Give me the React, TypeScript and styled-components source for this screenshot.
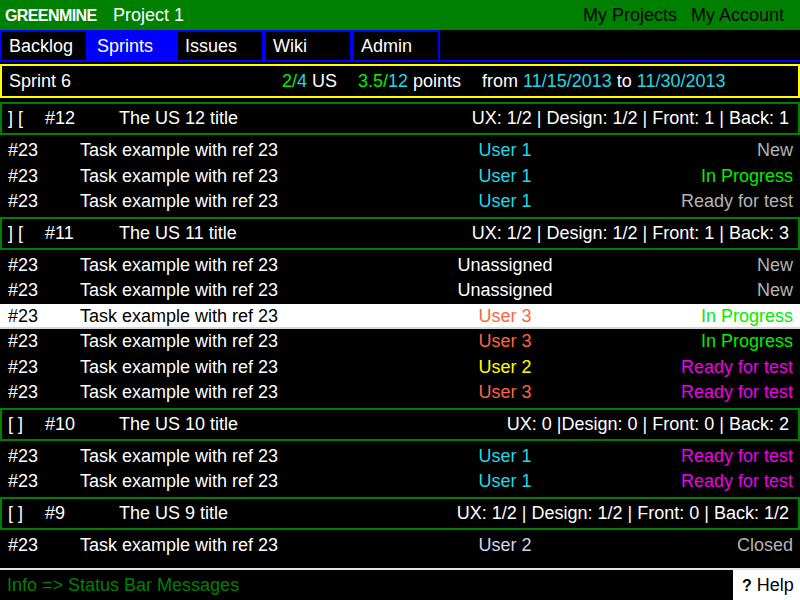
import React from "react";
import styled, {createGlobalStyle} from "styled-components";

const GlobalStyle = createGlobalStyle`
  html, body {
    margin: 0;
    padding: 0;
    background: #000;
  }
  body {
    font-family: "Liberation Sans", Arial, sans-serif;
    font-size: 18px;
    color: #fff;
  }
`;

const C = {
    green: "#008000",
    bright: "#00ee00",
    cyan: "#1fd8e8",
    blue: "#0000ff",
    yellow: "#ffff00",
    magenta: "#ee00ee",
    orange: "#ff6340",
    grey: "#b4b4b4",
    lavender: "#d4d4ee",
};

interface ITask {
    ref: string,
    title: string,
    user: string,
    userColor: string,
    status: string,
    statusColor: string,
    selected?: boolean
}

interface IStory {
    mark: string,
    ref: string,
    title: string,
    stats: string,
    tasks: ITask[]
}

const task = (user: string, userColor: string, status: string, statusColor: string, selected = false): ITask => ({
    ref: "#23",
    title: "Task example with ref 23",
    user, userColor, status, statusColor, selected
});

const stories: IStory[] = [
    {
        mark: "] [", ref: "#12", title: "The US 12 title",
        stats: "UX: 1/2 | Design: 1/2 | Front: 1 | Back: 1",
        tasks: [
            task("User 1", C.cyan, "New", C.grey),
            task("User 1", C.cyan, "In Progress", C.bright),
            task("User 1", C.cyan, "Ready for test", C.grey),
        ]
    },
    {
        mark: "] [", ref: "#11", title: "The US 11 title",
        stats: "UX: 1/2 | Design: 1/2 | Front: 1 | Back: 3",
        tasks: [
            task("Unassigned", "#fff", "New", C.grey),
            task("Unassigned", "#fff", "New", C.grey),
            task("User 3", C.orange, "In Progress", C.bright, true),
            task("User 3", C.orange, "In Progress", C.bright),
            task("User 2", C.yellow, "Ready for test", C.magenta),
            task("User 3", C.orange, "Ready for test", C.magenta),
        ]
    },
    {
        mark: "[ ]", ref: "#10", title: "The US 10 title",
        stats: "UX: 0 |Design: 0 | Front: 0 | Back: 2",
        tasks: [
            task("User 1", C.cyan, "Ready for test", C.magenta),
            task("User 1", C.cyan, "Ready for test", C.magenta),
        ]
    },
    {
        mark: "[ ]", ref: "#9", title: "The US 9 title",
        stats: "UX: 1/2 | Design: 1/2 | Front: 0 | Back: 1/2",
        tasks: [
            task("User 2", C.lavender, "Closed", C.grey),
        ]
    },
];

const tabs = ["Backlog", "Sprints", "Issues", "Wiki", "Admin"];

const Screen = styled.div`
  width: 800px;
  height: 600px;
  display: flex;
  flex-direction: column;
  background: #000;
  overflow: hidden;
`;

const TopBar = styled.header`
  height: 30px;
  flex: 0 0 30px;
  background: ${C.green};
  display: flex;
  align-items: center;
  padding: 1px 16px 0 5px;
  box-sizing: border-box;
`;

const Brand = styled.span`
  font-weight: bold;
  font-size: 16px;
  letter-spacing: -0.6px;
  width: 108px;
`;

const ProjectName = styled.span`
  flex: 1;
`;

const NavLinks = styled.nav`
  display: flex;
  gap: 14px;
  color: #000;
`;

const TabBar = styled.div`
  display: flex;
  height: 32px;
  flex: 0 0 32px;
`;

const Tab = styled.div<{ $active?: boolean }>`
  width: 88px;
  box-sizing: border-box;
  border: 2px solid ${C.blue};
  background: ${p => p.$active ? C.blue : "#000"};
  padding-left: 7px;
  line-height: 28px;
`;

const TabFiller = styled.div`
  flex: 1;
  border-bottom: 2px solid ${C.blue};
`;

const SprintBar = styled.div`
  height: 34px;
  flex: 0 0 34px;
  box-sizing: border-box;
  margin: 2px 0;
  border: 2px solid ${C.yellow};
  display: flex;
  align-items: center;
  padding-left: 7px;
  white-space: pre;
`;

const SprintCell = styled.span<{ $w?: number }>`
  flex: ${p => p.$w ? `0 0 ${p.$w}px` : "1"};
`;

const Hl = styled.span<{ $color: string }>`
  color: ${p => p.$color};
`;

const List = styled.div`
  flex: 1;
  overflow: hidden;
`;

const StoryHeader = styled.div`
  height: 33px;
  box-sizing: border-box;
  margin: 2px 0 3px;
  border: 2px solid ${C.green};
  display: grid;
  grid-template-columns: 37px 74px 1fr auto;
  align-items: center;
  padding: 0 9px 0 6px;
  white-space: pre;
`;

const TaskRow = styled.div<{ $selected?: boolean }>`
  height: 25.5px;
  line-height: 25.5px;
  display: grid;
  grid-template-columns: 72px 355px 140px 1fr;
  padding: 0 7px 0 8px;
  background: ${p => p.$selected ? "#fff" : "#000"};
  color: ${p => p.$selected ? "#000" : "#fff"};
  box-shadow: ${p => p.$selected ? "inset 0 -2px 0 #d8d8d8" : "none"};
`;

const UserCell = styled.span<{ $color: string }>`
  color: ${p => p.$color};
  text-align: center;
`;

const StatusCell = styled.span<{ $color: string }>`
  color: ${p => p.$color};
  text-align: right;
`;

const StatusBar = styled.footer`
  height: 32px;
  flex: 0 0 32px;
  display: flex;
  box-sizing: border-box;
  border-top: 2px solid #e4e4e4;
`;

const StatusText = styled.div`
  flex: 1;
  color: ${C.green};
  padding-left: 7px;
  line-height: 30px;
`;

const HelpBox = styled.div`
  width: 67px;
  background: #fff;
  color: #000;
  line-height: 30px;
  padding-left: 9px;
  box-sizing: border-box;
  white-space: pre;
`;

const QMark = styled.b`
  font-size: 16px;
`;

const Story = ({story}: { story: IStory }) => <>
    <StoryHeader>
        <span>{story.mark}</span>
        <span>{story.ref}</span>
        <span>{story.title}</span>
        <span>{story.stats}</span>
    </StoryHeader>
    {story.tasks.map((t, i) =>
        <TaskRow key={`${story.ref}/${i}`} $selected={t.selected}>
            <span>{t.ref}</span>
            <span>{t.title}</span>
            <UserCell $color={t.userColor}>{t.user}</UserCell>
            <StatusCell $color={t.statusColor}>{t.status}</StatusCell>
        </TaskRow>
    )}
</>;

const App = () => <>
    <GlobalStyle/>
    <Screen>
        <TopBar>
            <Brand>GREENMINE</Brand>
            <ProjectName>Project 1</ProjectName>
            <NavLinks>
                <span>My Projects</span>
                <span>My Account</span>
            </NavLinks>
        </TopBar>
        <TabBar>
            {tabs.map(t => <Tab key={t} $active={t === "Sprints"}>{t}</Tab>)}
            <TabFiller/>
        </TabBar>
        <SprintBar>
            <SprintCell $w={273}>Sprint 6</SprintCell>
            <SprintCell $w={76}><Hl $color={C.bright}>2/</Hl><Hl $color={C.cyan}>4</Hl> US</SprintCell>
            <SprintCell $w={124}><Hl $color={C.bright}>3.5/</Hl><Hl $color={C.cyan}>12</Hl> points</SprintCell>
            <SprintCell>from <Hl $color={C.cyan}>11/15/2013</Hl> to <Hl $color={C.cyan}>11/30/2013</Hl></SprintCell>
        </SprintBar>
        <List>
            {stories.map(s => <Story key={s.ref} story={s}/>)}
        </List>
        <StatusBar>
            <StatusText>Info =&gt; Status Bar Messages</StatusText>
            <HelpBox><QMark>?</QMark> Help</HelpBox>
        </StatusBar>
    </Screen>
</>;

export default App;
